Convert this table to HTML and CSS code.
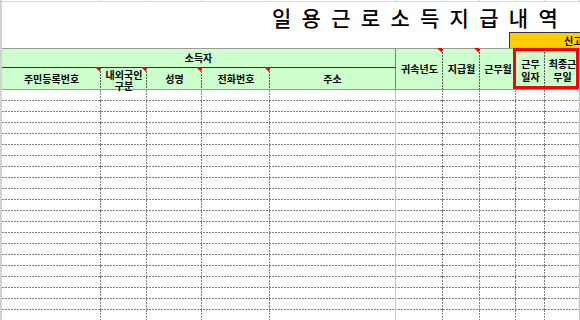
FILE: index.html
```html
<!DOCTYPE html>
<html lang="ko">
<head>
<meta charset="utf-8">
<link rel="stylesheet" href="styles.css">
</head>
<body>
<div class="sheet">
  <div class="grid top"><i></i><i></i><i></i><i></i><i></i><i></i><i></i><i></i><i></i><i></i><i></i></div>
  <div class="title">일 용 근 로 소 득 지 급 내 역</div>
  <div class="band"><div class="report">신고</div></div>
  <div class="grid head">
    <div class="h group-title">소득자</div>
    <div class="h r2 c1 note">주민등록번호</div>
    <div class="h r2 c2 note two">내외국인<br>구분</div>
    <div class="h r2 c3 note">성명</div>
    <div class="h r2 c4 note">전화번호</div>
    <div class="h r2 c5 solid">주소</div>
    <div class="h tall c6 note">귀속년도</div>
    <div class="h tall c7 note">지급월</div>
    <div class="h tall c8">근무월</div>
    <div class="hl">
      <div class="h inner">근무<br>일자</div>
      <div class="h inner last">최종근<br>무일</div>
    </div>
    <div class="h tall c11 blank"></div>
  </div>
  <div class="rows">
    <div class="grid row"><i></i><i></i><i></i><i></i><i class="s"></i><i></i><i></i><i></i><i></i><i class="s"></i><i></i></div>
    <div class="grid row"><i></i><i></i><i></i><i></i><i class="s"></i><i></i><i></i><i></i><i></i><i class="s"></i><i></i></div>
    <div class="grid row"><i></i><i></i><i></i><i></i><i class="s"></i><i></i><i></i><i></i><i></i><i class="s"></i><i></i></div>
    <div class="grid row"><i></i><i></i><i></i><i></i><i class="s"></i><i></i><i></i><i></i><i></i><i class="s"></i><i></i></div>
    <div class="grid row"><i></i><i></i><i></i><i></i><i class="s"></i><i></i><i></i><i></i><i></i><i class="s"></i><i></i></div>
    <div class="grid row"><i></i><i></i><i></i><i></i><i class="s"></i><i></i><i></i><i></i><i></i><i class="s"></i><i></i></div>
    <div class="grid row"><i></i><i></i><i></i><i></i><i class="s"></i><i></i><i></i><i></i><i></i><i class="s"></i><i></i></div>
    <div class="grid row"><i></i><i></i><i></i><i></i><i class="s"></i><i></i><i></i><i></i><i></i><i class="s"></i><i></i></div>
    <div class="grid row"><i></i><i></i><i></i><i></i><i class="s"></i><i></i><i></i><i></i><i></i><i class="s"></i><i></i></div>
    <div class="grid row"><i></i><i></i><i></i><i></i><i class="s"></i><i></i><i></i><i></i><i></i><i class="s"></i><i></i></div>
    <div class="grid row"><i></i><i></i><i></i><i></i><i class="s"></i><i></i><i></i><i></i><i></i><i class="s"></i><i></i></div>
    <div class="grid row"><i></i><i></i><i></i><i></i><i class="s"></i><i></i><i></i><i></i><i></i><i class="s"></i><i></i></div>
    <div class="grid row"><i></i><i></i><i></i><i></i><i class="s"></i><i></i><i></i><i></i><i></i><i class="s"></i><i></i></div>
    <div class="grid row"><i></i><i></i><i></i><i></i><i class="s"></i><i></i><i></i><i></i><i></i><i class="s"></i><i></i></div>
    <div class="grid row"><i></i><i></i><i></i><i></i><i class="s"></i><i></i><i></i><i></i><i></i><i class="s"></i><i></i></div>
    <div class="grid row"><i></i><i></i><i></i><i></i><i class="s"></i><i></i><i></i><i></i><i></i><i class="s"></i><i></i></div>
    <div class="grid row"><i></i><i></i><i></i><i></i><i class="s"></i><i></i><i></i><i></i><i></i><i class="s"></i><i></i></div>
    <div class="grid row"><i></i><i></i><i></i><i></i><i class="s"></i><i></i><i></i><i></i><i></i><i class="s"></i><i></i></div>
    <div class="grid row"><i></i><i></i><i></i><i></i><i class="s"></i><i></i><i></i><i></i><i></i><i class="s"></i><i></i></div>
    <div class="grid row"><i></i><i></i><i></i><i></i><i class="s"></i><i></i><i></i><i></i><i></i><i class="s"></i><i></i></div>
    <div class="grid row"><i></i><i></i><i></i><i></i><i class="s"></i><i></i><i></i><i></i><i></i><i class="s"></i><i></i></div>
  </div>
</div>
</body>
</html>
```
FILE: styles.css
```css
html, body {
  margin: 0;
  padding: 0;
  width: 580px;
  height: 320px;
  overflow: hidden;
  background: #fff;
}
body {
  font-family: "Noto Sans CJK KR", "Noto Sans", sans-serif;
  color: #000;
}
.sheet {
  border-left: 2px solid #d2d2d2;
  width: 620px;
  height: 320px;
}
.grid {
  display: grid;
  grid-template-columns: 99px 46px 55px 68px 126px 47px 37px 36px 29px 35px 40px;
}
.top {
  height: 2px;
}
.top i {
  border-right: 1px solid #d9d9d9;
  border-bottom: 1px solid #d9d9d9;
}
.title {
  height: 30px;
  line-height: 30px;
  padding-left: 270px;
  font-size: 21px;
  font-weight: 500;
  letter-spacing: 2.2px;
  white-space: nowrap;
}
.band {
  height: 16px;
  display: flex;
}
.report {
  margin-left: 507px;
  flex: 1;
  background: #ffcc00;
  border-top: 1px solid #333;
  border-left: 1px solid #333;
  padding-left: 54px;
  font-size: 10px;
  font-weight: 700;
  line-height: 15px;
  white-space: nowrap;
}
.head {
  grid-template-rows: 19px 22px;
  border-top: 1px solid #9a9a9a;
  background: #ccffcc;
}
.h {
  position: relative;
  display: flex;
  align-items: center;
  justify-content: center;
  text-align: center;
  font-size: 10px;
  font-weight: 700;
  line-height: 12px;
  white-space: nowrap;
  background-image: repeating-linear-gradient(180deg, #555 0 2px, transparent 2px 3px);
  background-position: right top;
  background-size: 1px 100%;
  background-repeat: no-repeat;
}
.group-title {
  grid-column: 1 / 6;
  grid-row: 1;
  border-bottom: 1px solid #333;
  border-right: 1px solid #808080;
  background-image: none;
}
.r2 {
  grid-row: 2;
  border-bottom: 1px solid #9a9a9a;
}
.c1 { grid-column: 1; }
.c2 { grid-column: 2; }
.c3 { grid-column: 3; }
.c4 { grid-column: 4; }
.c5 { grid-column: 5; }
.solid {
  background-image: none;
  border-right: 1px solid #808080;
}
.tall {
  grid-row: 1 / 3;
  border-bottom: 1px solid #9a9a9a;
}
.c6 { grid-column: 6; }
.c7 { grid-column: 7; }
.c8 { grid-column: 8; }
.c11 { grid-column: 11; }
.blank {
  background: #fff;
  border-bottom: none;
}
.two {
  line-height: 11px;
  padding-top: 2px;
}
.hl {
  grid-column: 9 / 11;
  grid-row: 1 / 3;
  position: relative;
  display: grid;
  grid-template-columns: 29px 35px;
  border-bottom: 1px solid #9a9a9a;
}
.hl::after {
  content: "";
  position: absolute;
  top: -1px;
  left: -3px;
  right: 1px;
  bottom: 0px;
  border: 3px solid #ff0000;
}
.inner {
  line-height: 13px;
  padding-top: 1px;
}
.last {
  background-image: none;
}
.note::after {
  content: "";
  position: absolute;
  top: -1px;
  right: 1px;
  width: 0;
  height: 0;
  border-top: 5px solid #ff0000;
  border-left: 5px solid transparent;
}
.row {
  height: 11px;
  background-image: repeating-linear-gradient(90deg, #808080 0 2px, transparent 2px 3px);
  background-position: left bottom;
  background-size: 100% 1px;
  background-repeat: no-repeat;
}
.row i {
  background-image: repeating-linear-gradient(180deg, #808080 0 2px, transparent 2px 3px);
  background-position: right top;
  background-size: 1px 100%;
  background-repeat: no-repeat;
}
.row i.s {
  background-image: none;
  border-right: 1px solid #c4c4c4;
}
```
